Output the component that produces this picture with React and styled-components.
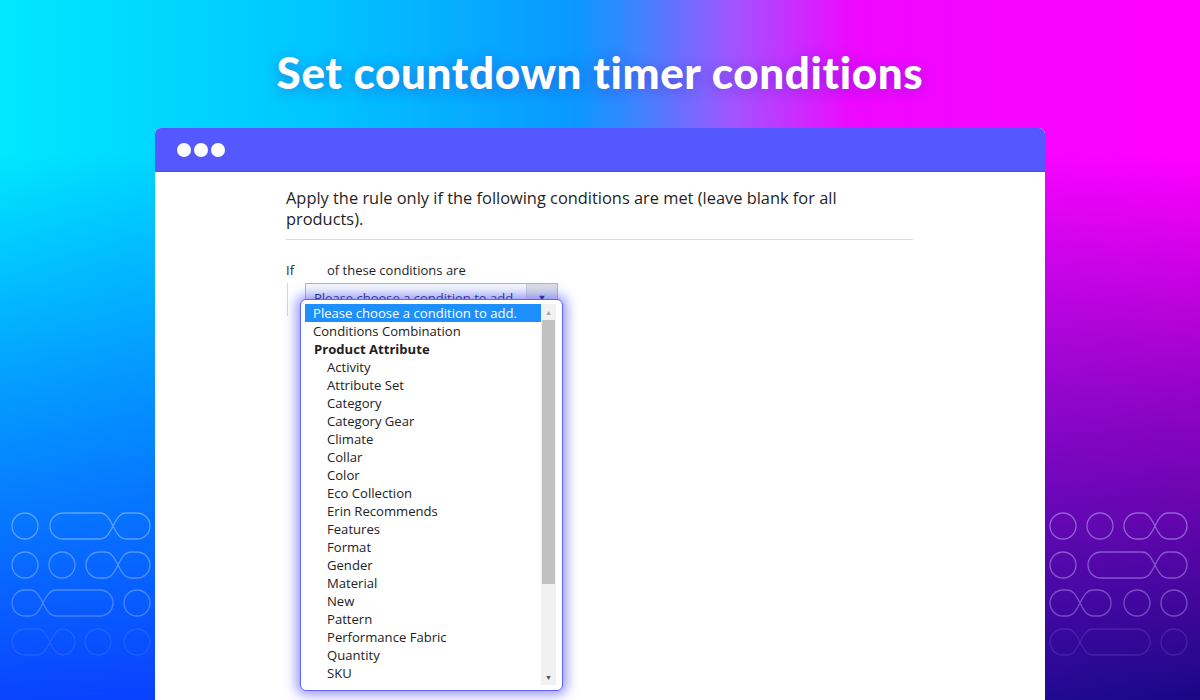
import React from 'react'
import styled, { createGlobalStyle } from 'styled-components'

const GlobalStyle = createGlobalStyle`
	html, body {
		margin: 0;
		padding: 0;
	}
	body {
		width: 1200px;
		height: 700px;
		overflow: hidden;
		font-family: 'Open Sans', 'Noto Sans', sans-serif;
	}
`

const OPTIONS = [
	{ label: 'Please choose a condition to add.', selected: true },
	{ label: 'Conditions Combination' },
	{ label: 'Product Attribute', bold: true },
	{ label: 'Activity', nested: true },
	{ label: 'Attribute Set', nested: true },
	{ label: 'Category', nested: true },
	{ label: 'Category Gear', nested: true },
	{ label: 'Climate', nested: true },
	{ label: 'Collar', nested: true },
	{ label: 'Color', nested: true },
	{ label: 'Eco Collection', nested: true },
	{ label: 'Erin Recommends', nested: true },
	{ label: 'Features', nested: true },
	{ label: 'Format', nested: true },
	{ label: 'Gender', nested: true },
	{ label: 'Material', nested: true },
	{ label: 'New', nested: true },
	{ label: 'Pattern', nested: true },
	{ label: 'Performance Fabric', nested: true },
	{ label: 'Quantity', nested: true },
	{ label: 'SKU', nested: true },
]

// shapes of the decoration, in svg coords (svg top sits at page y 508)
const LEFT_DECO = [
	{ type: 'circle', cx: 25, cy: 18, o: 0.4 },
	{ type: 'loop', xl: 63, xc: 113, xr: 137, cy: 18, o: 0.4 },
	{ type: 'circle', cx: 25, cy: 57, o: 0.35 },
	{ type: 'circle', cx: 62, cy: 57, o: 0.35 },
	{ type: 'loop', xl: 99, xc: 118, xr: 137, cy: 57, o: 0.35 },
	{ type: 'loop', xl: 25, xc: 43, xr: 100, cy: 95, o: 0.3 },
	{ type: 'circle', cx: 137, cy: 95, o: 0.3 },
	{ type: 'loop', xl: 25, xc: 50, xr: 62, cy: 134, o: 0.1 },
	{ type: 'circle', cx: 98, cy: 134, o: 0.1 },
	{ type: 'circle', cx: 137, cy: 134, o: 0.1 },
]

const RIGHT_DECO = [
	{ type: 'circle', cx: 18, cy: 18, o: 0.5 },
	{ type: 'circle', cx: 55, cy: 18, o: 0.5 },
	{ type: 'loop', xl: 92, xc: 110, xr: 129, cy: 18, o: 0.5 },
	{ type: 'circle', cx: 18, cy: 57, o: 0.45 },
	{ type: 'loop', xl: 56, xc: 110, xr: 129, cy: 57, o: 0.45 },
	{ type: 'loop', xl: 18, xc: 35, xr: 53, cy: 95, o: 0.4 },
	{ type: 'circle', cx: 92, cy: 95, o: 0.4 },
	{ type: 'circle', cx: 129, cy: 95, o: 0.4 },
	{ type: 'loop', xl: 18, xc: 35, xr: 92, cy: 134, o: 0.15 },
	{ type: 'circle', cx: 129, cy: 134, o: 0.15 },
]

const R = 13

const loopPath = ({ xl, xc, xr, cy }) =>
	`M${xl} ${cy - R} L${xc - R} ${cy - R} ` +
	`C${xc} ${cy - R} ${xc} ${cy + R} ${xc + R} ${cy + R} ` +
	`L${xr} ${cy + R} A${R} ${R} 0 0 0 ${xr} ${cy - R} ` +
	`L${xc + R} ${cy - R} ` +
	`C${xc} ${cy - R} ${xc} ${cy + R} ${xc - R} ${cy + R} ` +
	`L${xl} ${cy + R} A${R} ${R} 0 0 1 ${xl} ${cy - R} Z`

const Page = styled.div`
	position: relative;
	width: 1200px;
	height: 700px;
	display: flex;
	flex-direction: column;
	overflow: hidden;
	background: linear-gradient(
		90deg,
		#0a44ff 0%,
		#0c3cff 35%,
		#2a18d8 60%,
		#230b98 80%,
		#1a0886 100%
	);

	&::before {
		content: '';
		position: absolute;
		inset: 0;
		background: linear-gradient(
			90deg,
			#00e8ff 0%,
			#00c8ff 25%,
			#0a98ff 48%,
			#3c84ff 53%,
			#a056ff 61%,
			#ee08ff 71%,
			#ff00ff 100%
		);
		-webkit-mask-image: linear-gradient(to bottom, #000 0%, #000 22%, rgba(0, 0, 0, 0.55) 55%, transparent 100%);
		mask-image: linear-gradient(to bottom, #000 0%, #000 22%, rgba(0, 0, 0, 0.55) 55%, transparent 100%);
	}
`

const Title = styled.h1`
	position: relative;
	margin: 0;
	height: 128px;
	box-sizing: border-box;
	padding-top: 16px;
	display: flex;
	align-items: center;
	justify-content: center;
	font-family: 'Lato', 'Open Sans', sans-serif;
	font-weight: 900;
	font-size: 44px;
	letter-spacing: 0.6px;
	color: #fff;
	text-shadow: 0 2px 14px rgba(70, 40, 190, 0.45);
`

const Main = styled.div`
	position: relative;
	flex: 1;
	display: grid;
	grid-template-columns: 155px 890px 155px;
`

const DecoColumn = styled.div`
	display: flex;
	flex-direction: column;
	justify-content: flex-end;
	align-items: flex-start;
`

const Deco = ({ shapes, color }) => (
	<svg width="155" height="192" viewBox="0 0 155 192" fill="none">
		{shapes.map((s, i) =>
			s.type === 'circle' ? (
				<circle key={i} cx={s.cx} cy={s.cy} r={R} stroke={color} strokeOpacity={s.o} strokeWidth="1.3" />
			) : (
				<path key={i} d={loopPath(s)} stroke={color} strokeOpacity={s.o} strokeWidth="1.3" />
			)
		)}
	</svg>
)

const Window = styled.div`
	display: flex;
	flex-direction: column;
	background: #fff;
	border-radius: 6px 6px 0 0;
`

const WindowBar = styled.div`
	height: 43px;
	display: flex;
	align-items: center;
	gap: 3px;
	padding-left: 22px;
	background: #5558ff;
	border-bottom: 1px solid #4b4de6;
	border-radius: 6px 6px 0 0;
`

const Dot = styled.span`
	width: 14px;
	height: 14px;
	border-radius: 50%;
	background: #fff;
`

const WindowBody = styled.div`
	flex: 1;
	padding: 15px 0 0 131px;
	width: 627px;
	color: #1f1f1f;
`

const Intro = styled.p`
	margin: 0;
	padding: 0 14px 10px 0;
	border-bottom: 1px solid #dcdcdc;
	font-size: 16.4px;
	line-height: 21px;
`

const IfRow = styled.div`
	margin-top: 21px;
	font-size: 13px;
	line-height: 18px;
	display: flex;
	gap: 33px;
`

const Nested = styled.div`
	margin: 4px 0 0 1px;
	padding: 0 0 4px 17px;
	border-left: 1px solid #d6d6d6;
`

const SelectWrap = styled.div`
	position: relative;
	width: 253px;
`

const SelectBox = styled.div`
	height: 29px;
	display: flex;
	align-items: center;
	border: 1px solid #a7b6c6;
	background: linear-gradient(#f7f9fc, #e8edf4);
	font-size: 13px;
	color: #1b1e5a;
	box-sizing: border-box;
`

const SelectText = styled.span`
	flex: 1;
	padding-left: 8px;
	white-space: nowrap;
`

const SelectArrow = styled.span`
	align-self: stretch;
	width: 30px;
	display: flex;
	align-items: center;
	justify-content: center;
	background: #dcdfe4;
	border-left: 1px solid #c7ced8;
	font-size: 9px;
	color: #1b1e5a;
`

const Dropdown = styled.div`
	position: absolute;
	top: 16px;
	left: -5px;
	width: 263px;
	height: 392px;
	box-sizing: border-box;
	display: flex;
	padding: 4px 6px 5px 4px;
	background: #fff;
	border: 1.5px solid #6262f0;
	border-radius: 6px;
	box-shadow: 0 0 12px 4px rgba(85, 85, 255, 0.6);
`

const OptionList = styled.div`
	flex: 1;
	overflow: hidden;
`

const Option = styled.div`
	height: 18px;
	line-height: 18px;
	font-size: 13.1px;
	white-space: nowrap;
	padding-left: ${({ $nested, $bold }) => ($nested ? '22px' : $bold ? '9px' : '8px')};
	font-weight: ${({ $bold }) => ($bold ? 700 : 400)};
	background: ${({ $selected }) => ($selected ? '#1e8fff' : 'transparent')};
	color: ${({ $selected }) => ($selected ? '#fff' : '#222')};
`

const Scrollbar = styled.div`
	width: 15px;
	display: flex;
	flex-direction: column;
	background: #f1f1f1;
`

const ScrollButton = styled.div`
	height: 16px;
	display: flex;
	align-items: center;
	justify-content: center;
	font-size: 7px;
	color: ${({ $dim }) => ($dim ? '#a3a3a3' : '#505050')};
`

const ScrollThumb = styled.div`
	height: 264px;
	margin: 0 1px;
	background: #c1c1c1;
`

const ScrollRest = styled.div`
	flex: 1;
`

export default function App() {
	return (
		<>
			<GlobalStyle />
			<Page>
				<Title>Set countdown timer conditions</Title>
				<Main>
					<DecoColumn>
						<Deco shapes={LEFT_DECO} color="#dfe8ff" />
					</DecoColumn>
					<Window>
						<WindowBar>
							<Dot />
							<Dot />
							<Dot />
						</WindowBar>
						<WindowBody>
							<Intro>
								Apply the rule only if the following conditions are met (leave blank for all products).
							</Intro>
							<IfRow>
								<span>If</span>
								<span>of these conditions are</span>
							</IfRow>
							<Nested>
								<SelectWrap>
									<SelectBox>
										<SelectText>Please choose a condition to add.</SelectText>
										<SelectArrow>▼</SelectArrow>
									</SelectBox>
									<Dropdown>
										<OptionList>
											{OPTIONS.map((o) => (
												<Option
													key={o.label}
													$selected={o.selected}
													$bold={o.bold}
													$nested={o.nested}
												>
													{o.label}
												</Option>
											))}
										</OptionList>
										<Scrollbar>
											<ScrollButton $dim>▲</ScrollButton>
											<ScrollThumb />
											<ScrollRest />
											<ScrollButton>▼</ScrollButton>
										</Scrollbar>
									</Dropdown>
								</SelectWrap>
							</Nested>
						</WindowBody>
					</Window>
					<DecoColumn>
						<Deco shapes={RIGHT_DECO} color="#c8b8ff" />
					</DecoColumn>
				</Main>
			</Page>
		</>
	)
}
